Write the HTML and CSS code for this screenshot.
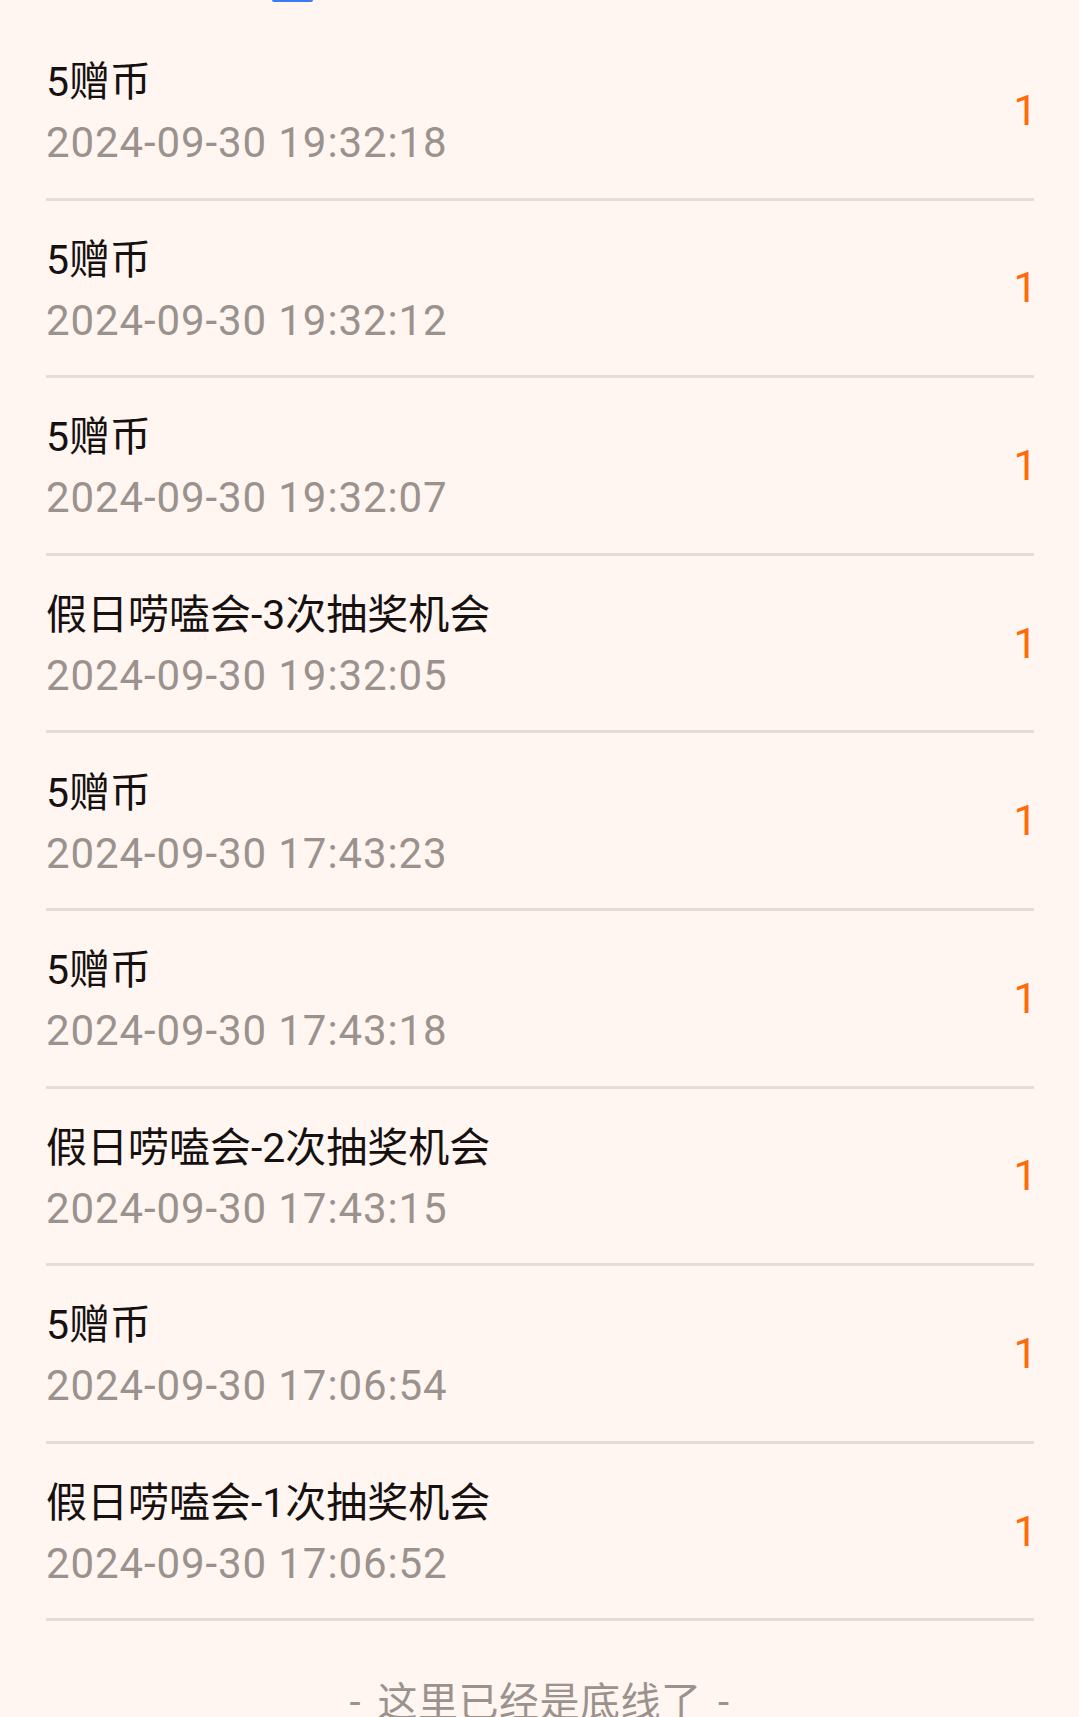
FILE: index.html
```html
<!DOCTYPE html>
<html lang="zh-CN">
<head>
    <meta charset="UTF-8">
    <meta name="viewport" content="width=device-width, initial-scale=1.0">
    <title>赠币记录</title>
    <link rel="stylesheet" href="styles.css">
</head>
<body>
    <div class="tab-line"></div>
    <div class="record-list">
        <div class="record-item">
            <div class="record-info">
                <div class="record-title">5赠币</div>
                <div class="record-time">2024-09-30 19:32:18</div>
            </div>
            <div class="record-amount">1</div>
        </div>
        <div class="record-item">
            <div class="record-info">
                <div class="record-title">5赠币</div>
                <div class="record-time">2024-09-30 19:32:12</div>
            </div>
            <div class="record-amount">1</div>
        </div>
        <div class="record-item">
            <div class="record-info">
                <div class="record-title">5赠币</div>
                <div class="record-time">2024-09-30 19:32:07</div>
            </div>
            <div class="record-amount">1</div>
        </div>
        <div class="record-item">
            <div class="record-info">
                <div class="record-title">假日唠嗑会-3次抽奖机会</div>
                <div class="record-time">2024-09-30 19:32:05</div>
            </div>
            <div class="record-amount">1</div>
        </div>
        <div class="record-item">
            <div class="record-info">
                <div class="record-title">5赠币</div>
                <div class="record-time">2024-09-30 17:43:23</div>
            </div>
            <div class="record-amount">1</div>
        </div>
        <div class="record-item">
            <div class="record-info">
                <div class="record-title">5赠币</div>
                <div class="record-time">2024-09-30 17:43:18</div>
            </div>
            <div class="record-amount">1</div>
        </div>
        <div class="record-item">
            <div class="record-info">
                <div class="record-title">假日唠嗑会-2次抽奖机会</div>
                <div class="record-time">2024-09-30 17:43:15</div>
            </div>
            <div class="record-amount">1</div>
        </div>
        <div class="record-item">
            <div class="record-info">
                <div class="record-title">5赠币</div>
                <div class="record-time">2024-09-30 17:06:54</div>
            </div>
            <div class="record-amount">1</div>
        </div>
        <div class="record-item">
            <div class="record-info">
                <div class="record-title">假日唠嗑会-1次抽奖机会</div>
                <div class="record-time">2024-09-30 17:06:52</div>
            </div>
            <div class="record-amount">1</div>
        </div>
    </div>
    <div class="list-end">- 这里已经是底线了 -</div>
</body>
</html>
```

FILE: styles.css
```css
body {
    margin: 0;
    background-color: #fff6f1;
    font-family: Roboto, "Noto Sans CJK SC", sans-serif;
    overflow: hidden;
}
.tab-line {
    width: 41px;
    height: 2px;
    margin-left: 272px;
    background-color: #3a7cf6;
    border-radius: 0 0 2px 2px;
}
.record-list {
    margin: 21px 45px 0 46px;
}
.record-item {
    display: flex;
    align-items: center;
    justify-content: space-between;
    padding: 30.3px 0 25.3px;
    border-bottom: 3px solid #e4dcd8;
}
.record-title {
    font-size: 41px;
    line-height: 58px;
    color: #161110;
}
.record-time {
    margin-top: 3px;
    font-size: 42px;
    line-height: 58px;
    letter-spacing: 0.9px;
    color: #9b928e;
}
.record-amount {
    margin-right: -3px;
    margin-bottom: 5px;
    font-size: 42px;
    color: #ff6a0a;
}
.list-end {
    padding-top: 54px;
    text-align: center;
    font-size: 40px;
    line-height: 56px;
    letter-spacing: 0.5px;
    word-spacing: 6px;
    color: #9b928e;
}
```
